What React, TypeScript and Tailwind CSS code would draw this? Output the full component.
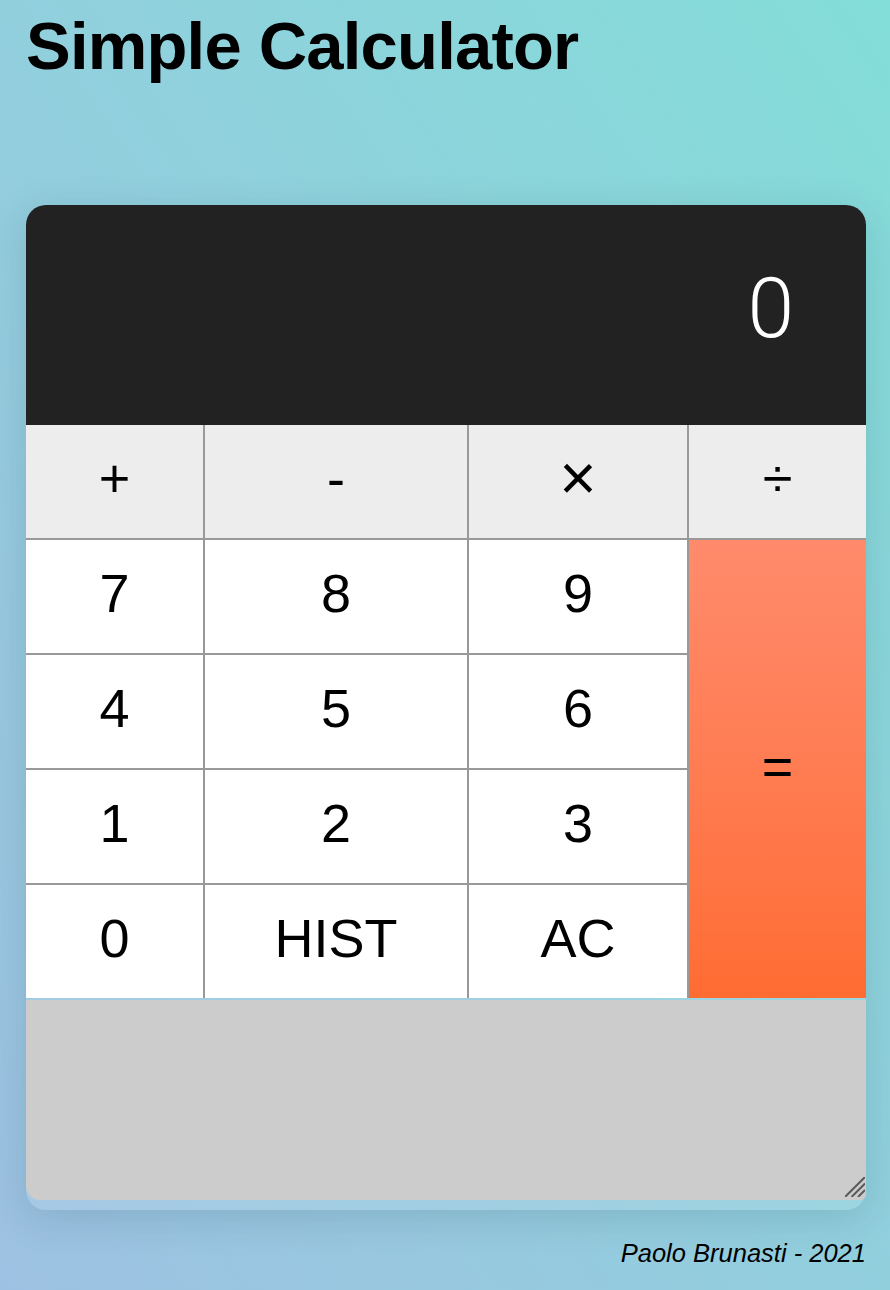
import React, { useState } from 'react';

const operators = ['+', '-', '×', '÷'];

const digitRows = [
  ['7', '8', '9'],
  ['4', '5', '6'],
  ['1', '2', '3'],
  ['0', 'HIST', 'AC'],
];

const App: React.FC = () => {
  const [display] = useState('0');
  const [history, setHistory] = useState('');

  return (
    <div className="min-h-screen bg-linear-to-tr from-[#9dc1e2] to-[#83ddd8] px-[26px] font-['Liberation_Sans',Arial,sans-serif] text-black">
      {/* Header */}
      <h1 className="pt-[12px] text-[67px] font-bold leading-none tracking-[-0.8px]">Simple Calculator</h1>

      {/* Calculator */}
      <div className="mt-[126px] w-[840px] rounded-[20px] bg-white/10 shadow-[0_8px_40px_rgba(0,40,60,0.14)]">
        <div className="flex h-[220px] justify-end rounded-t-[20px] bg-[#222222] pr-[72px] pt-[62px]">
          <span className="font-['Roboto',sans-serif] text-[84px] font-light leading-none text-white">{display}</span>
        </div>

        <div className="grid grid-cols-[177px_262px_218px_177px] grid-rows-[113px_113px_113px_113px_113px] gap-[2px] bg-[#999999]">
          {operators.map(op => (
            <button
              key={op}
              className={
                op === '×'
                  ? 'flex items-center justify-center bg-[#ededed] pb-[7px] text-[64px] leading-none'
                  : 'flex items-center justify-center bg-[#ededed] pb-[7px] text-[54px] leading-none'
              }
            >
              {op}
            </button>
          ))}
          {digitRows.map((row, i) => (
            <React.Fragment key={i}>
              {row.map(d => (
                <button
                  key={d}
                  className="flex items-center justify-center bg-white pb-[7px] text-[54px] leading-none"
                >
                  {d}
                </button>
              ))}
              {i === 0 && (
                <button className="row-span-4 flex items-center justify-center bg-linear-to-b from-[#ff8b6c] to-[#ff6c32] pb-[7px] text-[54px] leading-none">
                  =
                </button>
              )}
            </React.Fragment>
          ))}
        </div>

        <div className="relative mt-[2px] pb-[10px]">
          <textarea
            value={history}
            onChange={e => setHistory(e.target.value)}
            className="block h-[200px] w-full resize-none rounded-br-[6px] rounded-bl-[14px] bg-[#cccccc] outline-none"
          />
          <svg className="pointer-events-none absolute right-[1px] bottom-[13px]" width="20" height="20" viewBox="0 0 20 20">
            <line x1="20" y1="0" x2="0" y2="20" stroke="#5a5a5a" strokeWidth="2" />
            <line x1="20" y1="6.5" x2="6.5" y2="20" stroke="#5a5a5a" strokeWidth="2" />
            <line x1="20" y1="13" x2="13" y2="20" stroke="#5a5a5a" strokeWidth="2" />
          </svg>
        </div>
      </div>

      {/* Footer */}
      <p className="mt-[31px] w-[840px] text-right text-[25.5px] italic leading-none">Paolo Brunasti - 2021</p>
    </div>
  );
};

export default App;
